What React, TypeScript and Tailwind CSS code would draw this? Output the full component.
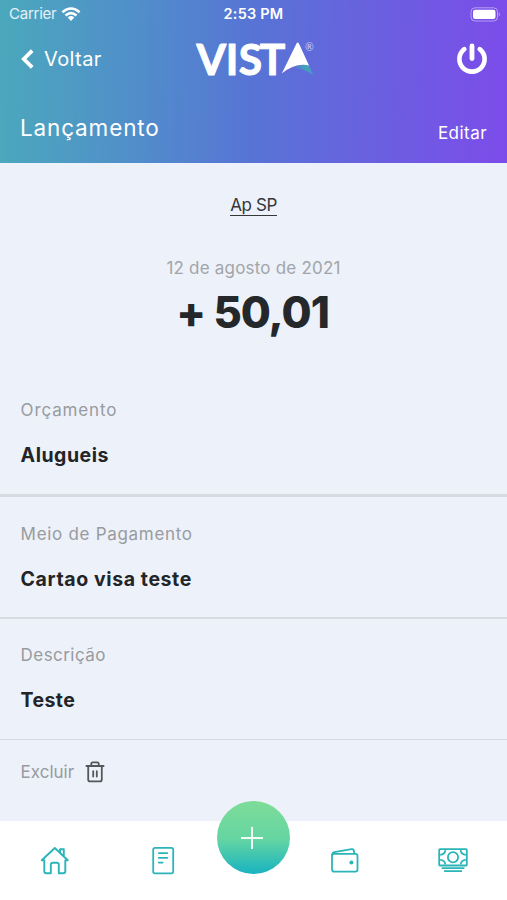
import React from "react";

function Wifi() {
  return (
    <svg width="20" height="15" viewBox="0 0 20 15" fill="none" stroke="white" strokeWidth="2.5">
      <path d="M1.4 5.2Q10 -2.1 18.6 5.2" />
      <path d="M4.5 8.5Q10 3.8 15.5 8.5" />
      <path d="M10 14 6.7 10.5Q10 7.7 13.3 10.5Z" fill="white" stroke="none" />
    </svg>
  );
}

function Battery() {
  return (
    <svg width="31" height="15" viewBox="0 0 31 15">
      <rect x="1" y="0.8" width="26.5" height="13.2" rx="4" fill="none" stroke="white" strokeOpacity="0.45" />
      <rect x="3" y="2.8" width="22.5" height="9.2" rx="2.2" fill="white" />
      <path d="M28.8 5.2Q31 7.4 28.8 9.6Z" fill="white" fillOpacity="0.5" />
    </svg>
  );
}

function Logo() {
  return (
    <svg width="122" height="56" viewBox="0 -8 122 56" className="overflow-visible font-['Lato',sans-serif]">
      <defs>
        <linearGradient id="swoosh" x1="0" x2="1">
          <stop offset="0" stopColor="#9a45e0" />
          <stop offset="0.45" stopColor="#5b74d2" />
          <stop offset="0.75" stopColor="#3fa3b8" />
          <stop offset="1" stopColor="#4a9cc4" />
        </linearGradient>
      </defs>
      <text x="2.6 31.8 44.8 65.8" y="35.6" fontSize="42.5" fontWeight="700" fill="white" stroke="white" strokeWidth="1" strokeLinejoin="round">VIST</text>
      <path d="M86.5 35.8Q98 24.5 114.5 25.5L119.3 36.6Q113 30.5 103 29.4Q94 29.8 86.5 35.8Z" fill="url(#swoosh)" />
      <path d="M102.4 4.8Q103.7 2.4 105 4.8L115 26.4Q101 23.5 87.8 34.6Z" fill="white" />
      <text x="111" y="11.5" fontSize="10.5" fill="white" fillOpacity="0.7">®</text>
    </svg>
  );
}

function Field({ label, value, labelClass, valueClass, className }: { label: string; value: string; labelClass: string; valueClass: string; className: string }) {
  return (
    <section className={`px-[20.6px] border-[#d7dbe1] ${className}`}>
      <div className={`h-5 leading-5 text-[17px] text-[#989b9f] ${labelClass}`}>{label}</div>
      <div className={`mt-[25px] h-5 leading-5 text-[19.5px] font-bold text-[#222427] ${valueClass}`}>{value}</div>
    </section>
  );
}

export default function App() {
  return (
    <div className="flex h-[900px] w-[507px] flex-col overflow-hidden whitespace-nowrap bg-[#edf1f9] font-['Inter',sans-serif]">
      <header className="h-[163px] shrink-0 bg-[linear-gradient(91deg,#4ba8bc_0%,#5091c9_24%,#5774d5_50%,#6b5fe0_75%,#7c4cea_100%)] text-white">
        <div className="grid h-7 grid-cols-3 items-center pl-[9px] pr-[9px]">
          <div className="flex items-center gap-[5px] text-[15px] tracking-[-0.25px] text-white/85">
            Carrier
            <Wifi />
          </div>
          <div className="text-center text-[14.5px] font-semibold tracking-[0.2px]">2:53 PM</div>
          <div className="-mr-[3px] flex justify-end"><Battery /></div>
        </div>
        <div className="flex h-[62px] items-center justify-between pl-[21px] pr-[19px]">
          <div className="flex w-[171px] items-center">
            <svg width="13" height="20" viewBox="0 0 13 20" fill="none" stroke="white" strokeWidth="3.8">
              <path d="M11.2 1.6 2.8 10l8.4 8.4" />
            </svg>
            <span className="ml-[10px] text-[20px] tracking-[0.4px]">Voltar</span>
          </div>
          <Logo />
          <div className="flex w-[171px] justify-end">
            <svg width="32" height="32" viewBox="0 0 32 32" fill="none" stroke="white" strokeLinecap="round">
              <path d="M8.3 6.1A12.6 12.6 0 1 0 23.7 6.1" strokeWidth="4.6" />
              <path d="M16 3v12.5" strokeWidth="4.8" />
            </svg>
          </div>
        </div>
        <div className="flex justify-between pl-5 pr-5 pt-[24px]">
          <h1 className="h-7 text-[22.5px] leading-7 tracking-[0.85px]">Lançamento</h1>
          <span className="mt-[5px] h-7 text-[17px] leading-7 tracking-[0.45px]">Editar</span>
        </div>
      </header>

      <main className="h-[658px] shrink-0">
        <div className="flex flex-col items-center">
          <div className="mt-[31px] h-[22px] border-b-[1.5px] border-[#35373a] text-[17px] leading-[23px] tracking-[-0.4px] text-[#35373a]">Ap SP</div>
          <div className="mt-[42px] h-5 text-[17px] leading-5 tracking-[0.2px] text-[#a2a5a9]">12 de agosto de 2021</div>
          <div className="mr-[2px] mt-[12px] h-[46px] text-[43.5px] font-extrabold leading-[45px] tracking-[-1px] text-[#25282a]">+ 50,01</div>
        </div>
        <Field label="Orçamento" value="Alugueis" labelClass="tracking-[0.85px] text-[17.3px]" valueClass="tracking-[0.5px]" className="mt-[64px] h-[97px] border-b-[3px]" />
        <Field label="Meio de Pagamento" value="Cartao visa teste" labelClass="tracking-[0.7px]" valueClass="tracking-[0.6px]" className="h-[122px] border-b-[2px] pt-[27px]" />
        <Field label="Descrição" value="Teste" labelClass="tracking-[0.45px]" valueClass="tracking-[0.4px]" className="h-[121px] border-b pt-[26px]" />
        <div className="flex items-center pl-[20.6px] pt-[21px]">
          <span className="w-[64.4px] text-[17px] leading-5 text-[#989b9f]">Excluir</span>
          <svg width="20" height="22" viewBox="0 0 20 22" fill="none" stroke="#55585b" strokeWidth="1.8" strokeLinejoin="round" strokeLinecap="round">
            <path d="M1.4 5h17.2M3.2 5v13.4q0 2 2 2h9.6q2 0 2-2V5M6.3 5V2.8q0-1.5 1.5-1.5h4.4q1.5 0 1.5 1.5V5M8.2 10.2v5.3M11.8 10.2v5.3" />
          </svg>
        </div>
      </main>

      <nav className="relative grid h-[79px] shrink-0 grid-cols-[109px_108px_73px_109px_108px] items-center justify-items-center bg-white text-[#2cb5b8]">
        <svg width="30" height="30" viewBox="0 0 30 30" fill="none" stroke="currentColor" strokeWidth="1.9" strokeLinejoin="round" strokeLinecap="round">
          <path d="m1.8 14.2 13-12.2 13 12.2h-2.5v11q0 2-2 2h-4.5v-8.5q0-2-2-2h-4q-2 0-2 2v8.5H6.3q-2 0-2-2v-11H1.8M20 6.5V3.2h3.8V10" />
        </svg>
        <svg width="24" height="30" viewBox="0 0 24 30" fill="none" stroke="currentColor" strokeWidth="1.8" strokeLinecap="round">
          <rect x="2.2" y="1.9" width="20" height="25.4" rx="1.8" />
          <path d="M7.8 7.1h8.5M7.8 11.8h8.5M7.8 16.6h3.8" />
        </svg>
        <span />
        <svg width="30" height="30" viewBox="0 0 30 30" fill="none" stroke="currentColor" strokeWidth="1.8" strokeLinejoin="round">
          <rect x="2" y="7.9" width="25.5" height="17.7" rx="2" />
          <path d="M2.1 10Q2 6.7 4.3 6.2L21.5 3.2q2-.3 2.2 1.3l.7 3.3" />
          <circle cx="21.4" cy="16.6" r="2" fill="currentColor" stroke="none" />
        </svg>
        <svg width="30" height="28" viewBox="0 0 30 28" fill="none" stroke="currentColor" strokeWidth="1.8">
          <rect x="1.2" y="2.2" width="27.6" height="16.3" rx=".7" />
          <circle cx="15" cy="10.3" r="5.1" />
          <path d="M2.2 7.9Q6.8 7.7 7.4 3.2M22.6 3.2Q23.2 7.7 27.8 7.9M2.2 12.8Q6.8 13 7.4 17.5M22.6 17.5Q23.2 13 27.8 12.8M3.6 21.2h22.8M6 24.2h18" />
        </svg>
        <button className="absolute -top-[20px] left-[217px] flex h-[73px] w-[73px] items-center justify-center rounded-full bg-[linear-gradient(180deg,#7edc98_0%,#65d5a2_52%,#18b3c1_100%)]">
          <svg width="24" height="24" viewBox="0 0 24 24" stroke="#effff6" strokeWidth="2" className="mr-[3px]">
            <path d="M1 12h22M12 1v22" />
          </svg>
        </button>
      </nav>
    </div>
  );
}
